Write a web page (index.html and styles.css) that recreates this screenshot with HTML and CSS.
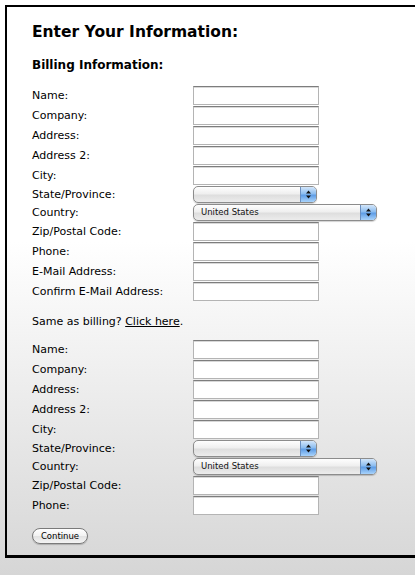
FILE: index.html
```html
<!DOCTYPE html>
<html>
<head>
<meta charset="utf-8">
<title>Enter Your Information</title>
<link rel="stylesheet" href="styles.css">
</head>
<body>
<div class="box">
  <h1 class="title">Enter Your Information:</h1>
  <h2 class="subtitle">Billing Information:</h2>
  <div class="form">
    <label class="row"><span class="lbl">Name:</span><input class="field" type="text"></label>
    <label class="row"><span class="lbl">Company:</span><input class="field" type="text"></label>
    <label class="row"><span class="lbl">Address:</span><input class="field" type="text"></label>
    <label class="row"><span class="lbl">Address 2:</span><input class="field" type="text"></label>
    <label class="row"><span class="lbl">City:</span><input class="field" type="text"></label>
    <div class="row"><span class="lbl">State/Province:</span><span class="sel sel-short"><span class="sel-text"></span><span class="sel-btn"><svg width="7" height="9" viewBox="0 0 7 9"><path d="M3.5 0.5 L6 3.5 L1 3.5 Z M1 5.5 L6 5.5 L3.5 8.5 Z" fill="#111"/></svg></span></span></div>
    <div class="row"><span class="lbl">Country:</span><span class="sel sel-long"><span class="sel-text">United States</span><span class="sel-btn"><svg width="7" height="9" viewBox="0 0 7 9"><path d="M3.5 0.5 L6 3.5 L1 3.5 Z M1 5.5 L6 5.5 L3.5 8.5 Z" fill="#111"/></svg></span></span></div>
    <label class="row"><span class="lbl">Zip/Postal Code:</span><input class="field" type="text"></label>
    <label class="row"><span class="lbl">Phone:</span><input class="field" type="text"></label>
    <label class="row"><span class="lbl">E-Mail Address:</span><input class="field" type="text"></label>
    <label class="row"><span class="lbl">Confirm E-Mail Address:</span><input class="field" type="text"></label>
  </div>
  <p class="same">Same as billing? <a class="link" href="#">Click here</a>.</p>
  <div class="form">
    <label class="row"><span class="lbl">Name:</span><input class="field" type="text"></label>
    <label class="row"><span class="lbl">Company:</span><input class="field" type="text"></label>
    <label class="row"><span class="lbl">Address:</span><input class="field" type="text"></label>
    <label class="row"><span class="lbl">Address 2:</span><input class="field" type="text"></label>
    <label class="row"><span class="lbl">City:</span><input class="field" type="text"></label>
    <div class="row"><span class="lbl">State/Province:</span><span class="sel sel-short"><span class="sel-text"></span><span class="sel-btn"><svg width="7" height="9" viewBox="0 0 7 9"><path d="M3.5 0.5 L6 3.5 L1 3.5 Z M1 5.5 L6 5.5 L3.5 8.5 Z" fill="#111"/></svg></span></span></div>
    <div class="row"><span class="lbl">Country:</span><span class="sel sel-long"><span class="sel-text">United States</span><span class="sel-btn"><svg width="7" height="9" viewBox="0 0 7 9"><path d="M3.5 0.5 L6 3.5 L1 3.5 Z M1 5.5 L6 5.5 L3.5 8.5 Z" fill="#111"/></svg></span></span></div>
    <label class="row"><span class="lbl">Zip/Postal Code:</span><input class="field" type="text"></label>
    <label class="row"><span class="lbl">Phone:</span><input class="field" type="text"></label>
  </div>
  <button class="btn" type="button">Continue</button>
</div>
</body>
</html>
```

FILE: styles.css
```css
html {
  height: 100%;
  overflow: hidden;
  background: linear-gradient(to bottom, #ffffff 0%, #ffffff 42%, #d6d6d6 100%);
}
body {
  margin: 0;
  height: 100%;
  overflow: hidden;
  font-family: "DejaVu Sans", sans-serif;
  color: #000;
}
.box {
  margin: 5px 0 0 5px;
  box-sizing: border-box;
  border: 2px solid #000;
  border-bottom-width: 3px;
  border-right: none;
  padding: 15px 0 11px 25px;
}
.title {
  margin: 0;
  font-size: 15.5px;
  line-height: 20px;
  font-weight: bold;
}
.subtitle {
  margin: 15px 0 0;
  font-size: 12px;
  line-height: 16px;
  font-weight: bold;
}
.form {
  display: flex;
  flex-direction: column;
  margin-top: 13px;
}
.row {
  display: grid;
  grid-template-columns: 161px auto;
  align-items: center;
  justify-items: start;
  font-size: 11px;
  line-height: 16px;
}
.lbl {
  white-space: nowrap;
}
.field {
  box-sizing: border-box;
  width: 126px;
  height: 19px;
  margin: 0 0 1px;
  padding: 0 3px;
  border: 1px solid #b4b4b4;
  border-top-color: #7d7d7d;
  box-shadow: inset 0 1px 0 #d8d8d8;
  background: #fff;
  outline: none;
}
.sel {
  box-sizing: border-box;
  display: flex;
  align-items: stretch;
  height: 17px;
  margin-bottom: 1px;
  border: 1px solid #8c8c8c;
  border-radius: 5px;
  overflow: hidden;
  background: linear-gradient(to bottom, #fefefe 0%, #efefef 45%, #dedede 55%, #ececec 100%);
  box-shadow: 0 1px 1px rgba(0,0,0,0.18);
}
.sel-short { width: 124px; }
.sel-long { width: 184px; }
.sel-text {
  flex: 1;
  padding-left: 7px;
  font-size: 8.5px;
  line-height: 15px;
  color: #111;
}
.sel-btn {
  width: 15px;
  display: flex;
  align-items: center;
  justify-content: center;
  border-left: 1px solid #6a8fc0;
  background: linear-gradient(to bottom, #d3e6fa 0%, #8cbdf0 45%, #5e9de6 55%, #a9d3fb 100%);
}
.same {
  margin: 12px 0 0;
  font-size: 11px;
  line-height: 16px;
}
.same + .form {
  margin-top: 10px;
}
.link {
  color: #000;
  text-decoration: underline;
}
.btn {
  display: block;
  margin-top: 12px;
  box-sizing: border-box;
  width: 56px;
  height: 16px;
  padding: 0;
  border: 1px solid #7a7a7a;
  border-radius: 8px;
  background: linear-gradient(to bottom, #ffffff 0%, #f2f2f2 50%, #e2e2e2 51%, #f4f4f4 100%);
  box-shadow: 0 1px 1px rgba(0,0,0,0.2);
  font-family: "DejaVu Sans", sans-serif;
  font-size: 8.5px;
  line-height: 14px;
  color: #000;
}
```
